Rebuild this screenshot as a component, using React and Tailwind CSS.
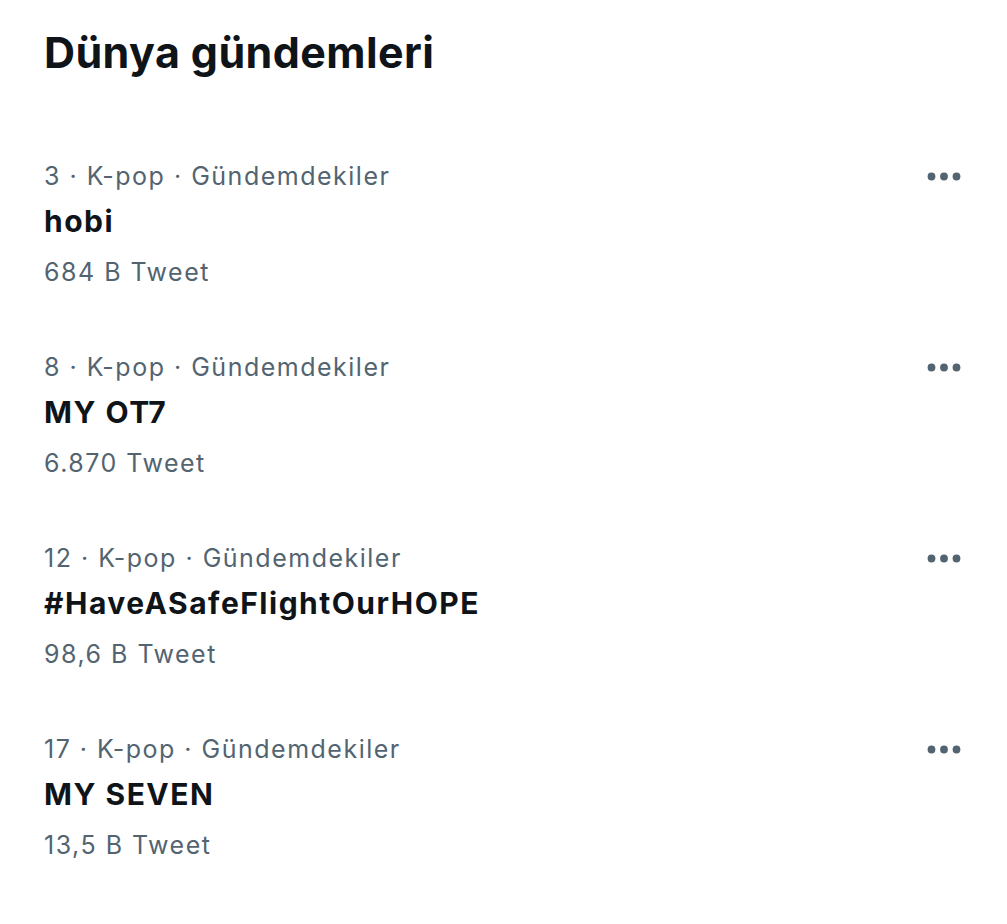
const trends = [
  { rank: 3, name: "hobi", count: "684 B Tweet" },
  { rank: 8, name: "MY OT7", count: "6.870 Tweet" },
  { rank: 12, name: "#HaveASafeFlightOurHOPE", count: "98,6 B Tweet" },
  { rank: 17, name: "MY SEVEN", count: "13,5 B Tweet" },
];

const MoreIcon = () => (
  <svg width="34" height="9" viewBox="0 0 34 9" className="text-[#536471]">
    <circle cx="4.5" cy="4.5" r="3.9" fill="currentColor" />
    <circle cx="17" cy="4.5" r="3.9" fill="currentColor" />
    <circle cx="29.5" cy="4.5" r="3.9" fill="currentColor" />
  </svg>
);

const TrendItem = ({ rank, name, count }) => {
  return (
    <div className="flex flex-col pt-[22px] pb-[23px]">
      <div className="flex flex-row items-center justify-between h-[44px]">
        <p className="text-[25px] leading-[44px] tracking-[1.5px] text-[#536471]">
          {rank} · K-pop · Gündemdekiler
        </p>
        <MoreIcon />
      </div>
      <p className="h-[46px] text-[30px] leading-[46px] tracking-[1.5px] font-bold text-[#0f1419]">
        {name}
      </p>
      <p className="h-[56px] text-[25px] leading-[56px] tracking-[1.5px] text-[#536471]">
        {count}
      </p>
    </div>
  );
};

const App = () => {
  return (
    <div
      className="w-[1007px] h-[924px] bg-white overflow-hidden pl-[44px] pr-[46px]"
      style={{ fontFamily: "Inter, 'Liberation Sans', sans-serif" }}
    >
      <div className="pt-[24px] pb-[52px]">
        <h1 className="text-[43px] leading-[56px] font-bold text-[#0f1419] tracking-[0.4px]">
          Dünya gündemleri
        </h1>
      </div>
      <div className="flex flex-col">
        {trends.map((t) => (
          <TrendItem key={t.rank} {...t} />
        ))}
      </div>
    </div>
  );
};

export default App;
